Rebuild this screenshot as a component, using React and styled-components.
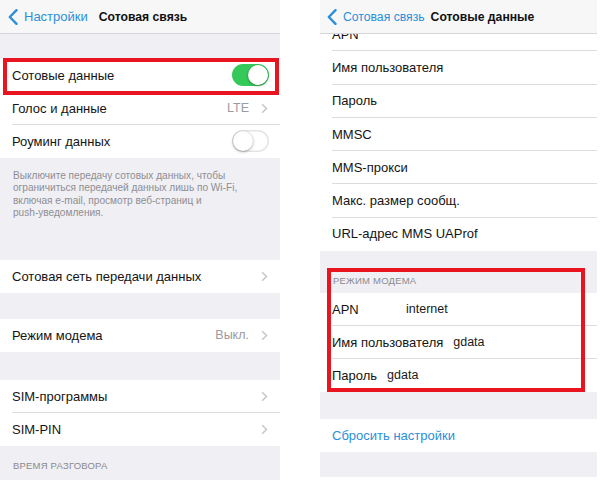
import React from "react";
import styled, { createGlobalStyle } from "styled-components";

const GlobalStyle = createGlobalStyle`
  body {
    margin: 0;
    background: #fff;
    font-family: "Liberation Sans", Arial, sans-serif;
    -webkit-font-smoothing: antialiased;
  }
`;

const BLUE = "#2b8fd8";
const RED = "#e8141f";

const Page = styled.div`
  display: flex;
  align-items: flex-start;
  gap: 40px;
  width: 600px;
  height: 480px;
  overflow: hidden;
  background: #fff;
`;

const Phone = styled.div`
  display: flex;
  flex-direction: column;
  width: ${(p) => p.$w}px;
  height: ${(p) => p.$h}px;
  background: #efeff4;
  overflow: hidden;
`;

const NavBar = styled.div`
  position: relative;
  z-index: 2;
  display: flex;
  align-items: center;
  flex: none;
  height: 33px;
  padding-left: ${(p) => p.$pad}px;
  background: #f7f7f8;
  border-bottom: 1px solid #d6d6da;
`;

const Back = styled.div`
  display: flex;
  align-items: center;
  gap: 6px;
  color: ${BLUE};
  font-size: ${(p) => p.$size || 13}px;
`;

const Title = styled.div`
  margin-left: ${(p) => p.$gap}px;
  font-size: 12.2px;
  font-weight: bold;
  color: #111;
`;

const Gap = styled.div`
  flex: none;
  height: ${(p) => p.$h}px;
`;

const Scroller = styled.div`
  flex: 1;
  overflow: hidden;
`;

const ScrollContent = styled.div`
  display: flex;
  flex-direction: column;
  margin-top: ${(p) => p.$offset}px;
`;

const Group = styled.div`
  display: flex;
  flex-direction: column;
  background: #fff;
`;

const Row = styled.div`
  display: flex;
  align-items: center;
  box-sizing: border-box;
  height: ${(p) => p.$h || 33}px;
  margin-left: 12px;
  padding-right: ${(p) => p.$padR || 12}px;
  border-bottom: 1px solid ${(p) => (p.$sep ? "#dcdce0" : "transparent")};
  font-size: 13px;
  color: ${(p) => p.$color || "#141414"};
`;

const Label = styled.span`
  flex: 1;
  white-space: nowrap;
`;

const FieldLabel = styled.span`
  min-width: ${(p) => p.$minW || 0}px;
  white-space: nowrap;
`;

const FieldValue = styled.span`
  margin-left: 10px;
  font-size: 12.5px;
  color: #1a1a1a;
`;

const Detail = styled.span`
  margin-right: 12px;
  font-size: 12.5px;
  color: #9a9aa0;
`;

const Highlight = styled.div`
  position: relative;
  display: flex;
  flex-direction: column;

  &::after {
    content: "";
    position: absolute;
    top: ${(p) => p.$t}px;
    bottom: ${(p) => p.$b}px;
    left: ${(p) => p.$l}px;
    right: ${(p) => p.$r}px;
    border: 4px solid ${RED};
    pointer-events: none;
  }
`;

const Toggle = styled.span`
  display: flex;
  justify-content: ${(p) => (p.$on ? "flex-end" : "flex-start")};
  align-items: center;
  box-sizing: border-box;
  width: 37px;
  height: 22px;
  padding: 1px;
  border-radius: 11px;
  background: ${(p) => (p.$on ? "#35c95a" : "#fff")};
  box-shadow: ${(p) => (p.$on ? "none" : "inset 0 0 0 1.5px #e4e4e8")};
`;

const Knob = styled.span`
  width: 20px;
  height: 20px;
  border-radius: 50%;
  background: #fff;
  box-shadow: 0 1px 3px rgba(0, 0, 0, 0.3), 0 0 0 0.5px rgba(0, 0, 0, 0.08);
`;

const Footnote = styled.div`
  box-sizing: border-box;
  height: ${(p) => p.$h}px;
  padding: 12px 12px 0 13px;
  font-size: 10.1px;
  line-height: 12.4px;
  color: #8e8e93;
`;

const SectionHeader = styled.div`
  display: flex;
  align-items: flex-end;
  box-sizing: border-box;
  height: ${(p) => p.$h}px;
  padding: 0 0 ${(p) => p.$pb}px ${(p) => p.$pl}px;
  font-size: 9.5px;
  letter-spacing: 0.2px;
  text-transform: uppercase;
  color: #8a8a8f;
`;

const Chevron = () => (
  <svg width="7" height="11" viewBox="0 0 7 11">
    <path d="M1.2 1.2L5.5 5.5L1.2 9.8" fill="none" stroke="#c6c6cb" strokeWidth="1.5" />
  </svg>
);

const BackChevron = () => (
  <svg width="10" height="16" viewBox="0 0 10 16">
    <path d="M8.5 1.2L1.8 8L8.5 14.8" fill="none" stroke={BLUE} strokeWidth="2.4" strokeLinecap="round" strokeLinejoin="round" />
  </svg>
);

const NavRow = ({ label, detail }) => (
  <>
    <Label>{label}</Label>
    {detail && <Detail>{detail}</Detail>}
    <Chevron />
  </>
);

const CellularScreen = () => (
  <Phone $w={280} $h={480}>
    <NavBar $pad={8}>
      <Back>
        <BackChevron />
        Настройки
      </Back>
      <Title $gap={11}>Сотовая связь</Title>
    </NavBar>
    <Gap $h={25} />
    <Group>
      <Highlight $t={-1} $b={-3} $l={3} $r={1}>
        <Row $sep $padR={11}>
          <Label>Сотовые данные</Label>
          <Toggle $on>
            <Knob />
          </Toggle>
        </Row>
      </Highlight>
      <Row $sep>
        <NavRow label="Голос и данные" detail="LTE" />
      </Row>
      <Row $padR={11}>
        <Label>Роуминг данных</Label>
        <Toggle>
          <Knob />
        </Toggle>
      </Row>
    </Group>
    <Footnote $h={102}>
      Выключите передачу сотовых данных, чтобы
      <br />
      ограничиться передачей данных лишь по Wi-Fi,
      <br />
      включая e-mail, просмотр веб-страниц и
      <br />
      push-уведомления.
    </Footnote>
    <Group>
      <Row>
        <NavRow label="Сотовая сеть передачи данных" />
      </Row>
    </Group>
    <Gap $h={26} />
    <Group>
      <Row>
        <NavRow label="Режим модема" detail="Выкл." />
      </Row>
    </Group>
    <Gap $h={28} />
    <Group>
      <Row $sep>
        <NavRow label="SIM-программы" />
      </Row>
      <Row>
        <NavRow label="SIM-PIN" />
      </Row>
    </Group>
    <SectionHeader $h={26} $pb={1} $pl={13}>
      Время разговора
    </SectionHeader>
  </Phone>
);

const apnRows = [
  "APN",
  "Имя пользователя",
  "Пароль",
  "MMSC",
  "MMS-прокси",
  "Макс. размер сообщ.",
  "URL-адрес MMS UAProf",
];

const modemRows = [
  { label: "APN", value: "internet", minW: 64 },
  { label: "Имя пользователя", value: "gdata" },
  { label: "Пароль", value: "gdata" },
];

const DataScreen = () => (
  <Phone $w={277} $h={477}>
    <NavBar $pad={7}>
      <Back $size={12.2}>
        <BackChevron />
        Сотовая связь
      </Back>
      <Title $gap={6}>Сотовые данные</Title>
    </NavBar>
    <Scroller>
      <ScrollContent $offset={-16}>
        <Group>
          {apnRows.map((label, i) => (
            <Row key={label} $h={33.3} $sep={i < apnRows.length - 1}>
              <Label>{label}</Label>
            </Row>
          ))}
        </Group>
        <Highlight $t={17} $b={0} $l={7} $r={12}>
          <SectionHeader $h={42} $pb={7} $pl={13}>
            Режим модема
          </SectionHeader>
          <Group>
            {modemRows.map((r, i) => (
              <Row key={r.label} $sep={i < modemRows.length - 1}>
                <FieldLabel $minW={r.minW}>{r.label}</FieldLabel>
                <FieldValue>{r.value}</FieldValue>
              </Row>
            ))}
          </Group>
        </Highlight>
        <Gap $h={27} />
        <Group>
          <Row $color={BLUE}>
            <Label>Сбросить настройки</Label>
          </Row>
        </Group>
      </ScrollContent>
    </Scroller>
  </Phone>
);

export default function App() {
  return (
    <>
      <GlobalStyle />
      <Page>
        <CellularScreen />
        <DataScreen />
      </Page>
    </>
  );
}
